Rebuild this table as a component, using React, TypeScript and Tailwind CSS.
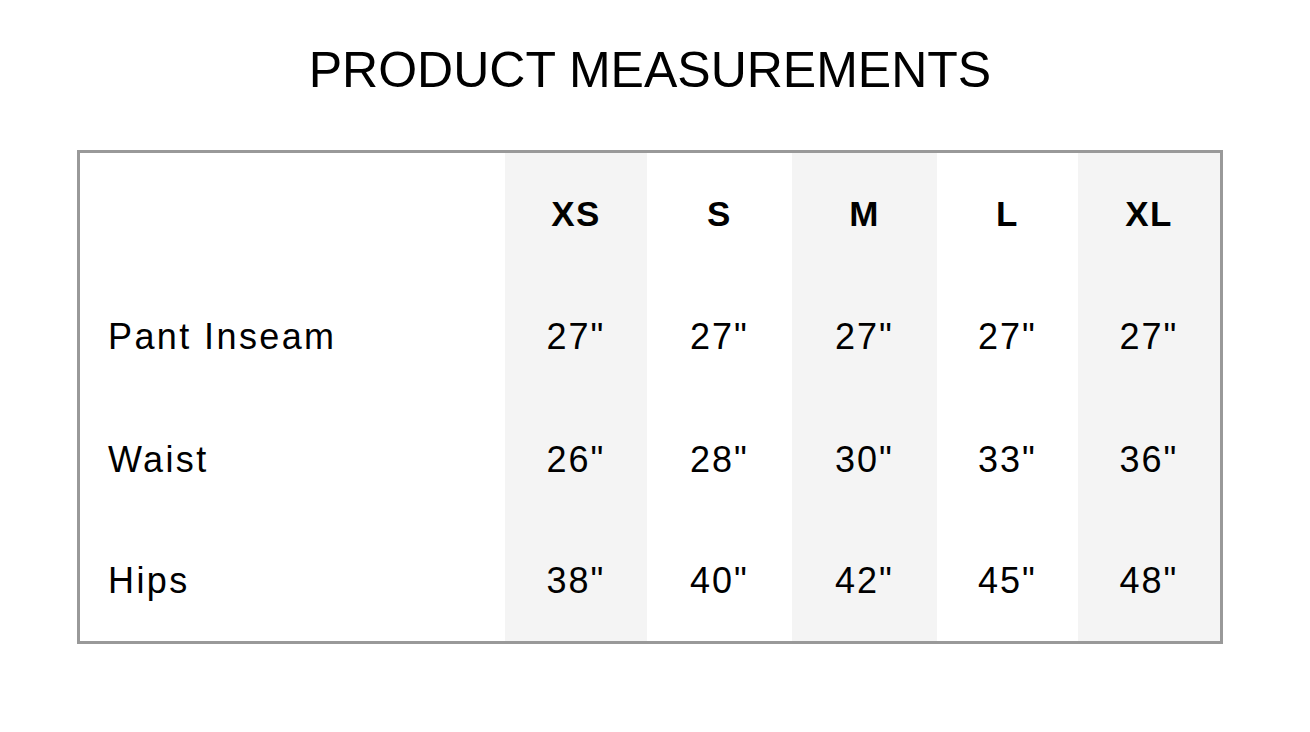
import React from 'react';

const sizes = ['XS', 'S', 'M', 'L', 'XL'];

const rows = [
  { label: 'Pant Inseam', values: ['27"', '27"', '27"', '27"', '27"'], height: 'h-[123px]' },
  { label: 'Waist', values: ['26"', '28"', '30"', '33"', '36"'], height: 'h-[123px]' },
  { label: 'Hips', values: ['38"', '40"', '42"', '45"', '48"'], height: 'h-[120px]' },
];

// every other size column gets a light grey band
const colBg = ['bg-[#f4f4f4]', 'bg-white', 'bg-[#f4f4f4]', 'bg-white', 'bg-[#f4f4f4]'];

function App() {
  return (
    <div className="min-h-screen bg-white font-['Liberation_Sans',Arial,sans-serif] text-black">
      <div className="w-[1300px]">
        <h1 className="pt-[45px] text-center text-[50px] leading-[50px] font-normal">
          PRODUCT MEASUREMENTS
        </h1>

        <div className="mx-[77px] mt-[55px] border-[3px] border-[#999999]">
          <div className="grid grid-cols-[425px_142px_145px_145px_141px_142px]">
            <div className="h-[122px]" />
            {sizes.map((size, i) => (
              <div
                key={size}
                className={`h-[122px] flex items-center justify-center text-[35px] font-bold tracking-[1.5px] ${colBg[i]}`}
              >
                {size}
              </div>
            ))}

            {rows.map(row => (
              <React.Fragment key={row.label}>
                <div className={`${row.height} flex items-center pl-[28px] text-[36px] tracking-[2.4px]`}>
                  {row.label}
                </div>
                {row.values.map((value, i) => (
                  <div
                    key={i}
                    className={`${row.height} flex items-center justify-center text-[36px] tracking-[2px] ${colBg[i]}`}
                  >
                    {value}
                  </div>
                ))}
              </React.Fragment>
            ))}
          </div>
        </div>
      </div>
    </div>
  );
}

export default App;
